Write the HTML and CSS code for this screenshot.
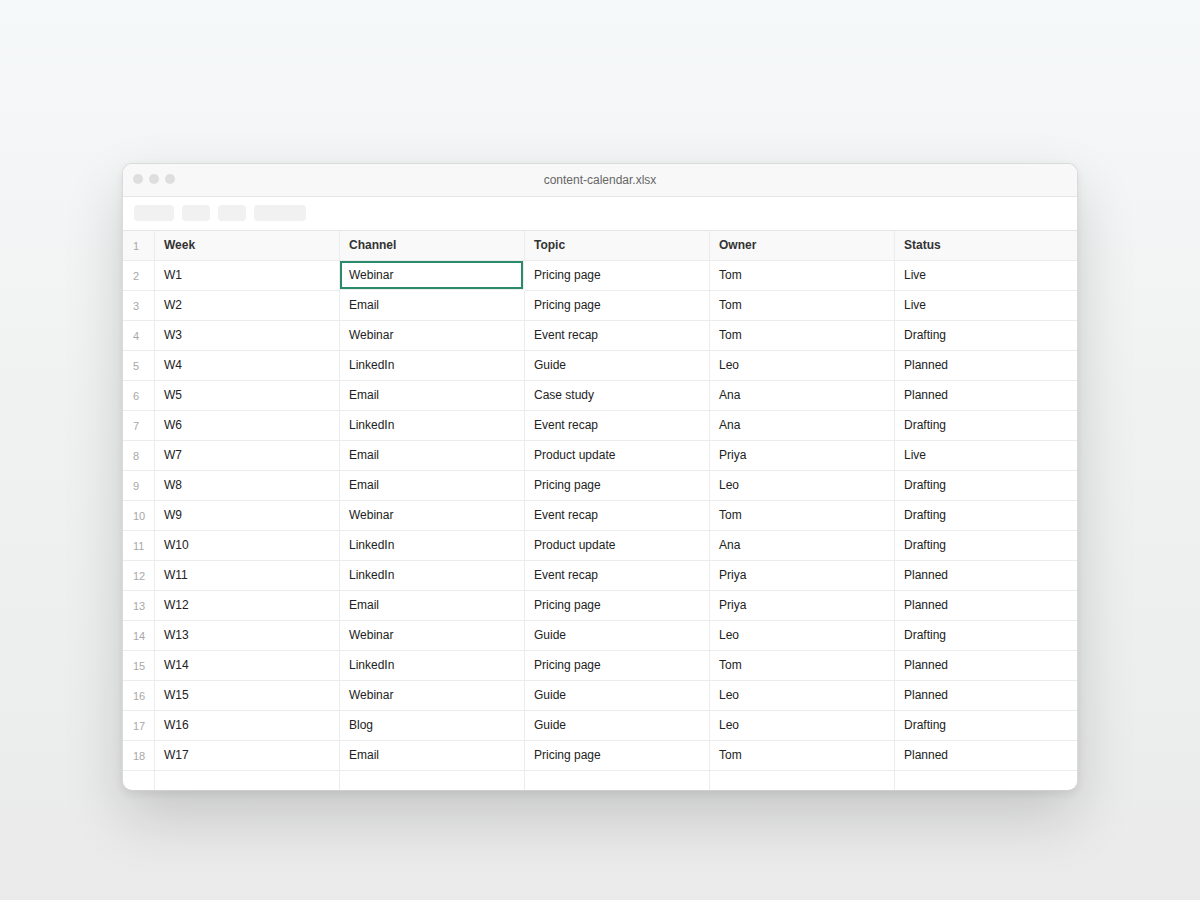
FILE: index.html
```html
<!DOCTYPE html>
<html>
<head>
<meta charset="utf-8">
<link rel="stylesheet" href="styles.css">
</head>
<body>
<div class="stage">
  <div class="window">
    <div class="titlebar">
      <div class="dots"><span class="dot"></span><span class="dot"></span><span class="dot"></span></div>
      <div class="title">content-calendar.xlsx</div>
    </div>
    <div class="toolbar">
      <span class="pill p1"></span><span class="pill p2"></span><span class="pill p2"></span><span class="pill p3"></span>
    </div>
    <div class="grid" id="grid">
      <div class="row head"><div class="num">1</div><div class="cell">Week</div><div class="cell">Channel</div><div class="cell">Topic</div><div class="cell">Owner</div><div class="cell">Status</div></div>
      <div class="row"><div class="num">2</div><div class="cell">W1</div><div class="cell sel">Webinar</div><div class="cell">Pricing page</div><div class="cell">Tom</div><div class="cell">Live</div></div>
      <div class="row"><div class="num">3</div><div class="cell">W2</div><div class="cell">Email</div><div class="cell">Pricing page</div><div class="cell">Tom</div><div class="cell">Live</div></div>
      <div class="row"><div class="num">4</div><div class="cell">W3</div><div class="cell">Webinar</div><div class="cell">Event recap</div><div class="cell">Tom</div><div class="cell">Drafting</div></div>
      <div class="row"><div class="num">5</div><div class="cell">W4</div><div class="cell">LinkedIn</div><div class="cell">Guide</div><div class="cell">Leo</div><div class="cell">Planned</div></div>
      <div class="row"><div class="num">6</div><div class="cell">W5</div><div class="cell">Email</div><div class="cell">Case study</div><div class="cell">Ana</div><div class="cell">Planned</div></div>
      <div class="row"><div class="num">7</div><div class="cell">W6</div><div class="cell">LinkedIn</div><div class="cell">Event recap</div><div class="cell">Ana</div><div class="cell">Drafting</div></div>
      <div class="row"><div class="num">8</div><div class="cell">W7</div><div class="cell">Email</div><div class="cell">Product update</div><div class="cell">Priya</div><div class="cell">Live</div></div>
      <div class="row"><div class="num">9</div><div class="cell">W8</div><div class="cell">Email</div><div class="cell">Pricing page</div><div class="cell">Leo</div><div class="cell">Drafting</div></div>
      <div class="row"><div class="num">10</div><div class="cell">W9</div><div class="cell">Webinar</div><div class="cell">Event recap</div><div class="cell">Tom</div><div class="cell">Drafting</div></div>
      <div class="row"><div class="num">11</div><div class="cell">W10</div><div class="cell">LinkedIn</div><div class="cell">Product update</div><div class="cell">Ana</div><div class="cell">Drafting</div></div>
      <div class="row"><div class="num">12</div><div class="cell">W11</div><div class="cell">LinkedIn</div><div class="cell">Event recap</div><div class="cell">Priya</div><div class="cell">Planned</div></div>
      <div class="row"><div class="num">13</div><div class="cell">W12</div><div class="cell">Email</div><div class="cell">Pricing page</div><div class="cell">Priya</div><div class="cell">Planned</div></div>
      <div class="row"><div class="num">14</div><div class="cell">W13</div><div class="cell">Webinar</div><div class="cell">Guide</div><div class="cell">Leo</div><div class="cell">Drafting</div></div>
      <div class="row"><div class="num">15</div><div class="cell">W14</div><div class="cell">LinkedIn</div><div class="cell">Pricing page</div><div class="cell">Tom</div><div class="cell">Planned</div></div>
      <div class="row"><div class="num">16</div><div class="cell">W15</div><div class="cell">Webinar</div><div class="cell">Guide</div><div class="cell">Leo</div><div class="cell">Planned</div></div>
      <div class="row"><div class="num">17</div><div class="cell">W16</div><div class="cell">Blog</div><div class="cell">Guide</div><div class="cell">Leo</div><div class="cell">Drafting</div></div>
      <div class="row"><div class="num">18</div><div class="cell">W17</div><div class="cell">Email</div><div class="cell">Pricing page</div><div class="cell">Tom</div><div class="cell">Planned</div></div>
      <div class="row"><div class="num"></div><div class="cell"></div><div class="cell"></div><div class="cell"></div><div class="cell"></div><div class="cell"></div></div>
    </div>
  </div>
</div>
</body>
</html>
```

FILE: styles.css
```css
html, body {
  margin: 0;
  padding: 0;
}
body {
  width: 1200px;
  height: 900px;
  background: linear-gradient(180deg, #f6f9f9 0%, #f0f2f2 45%, #eaeaea 100%);
  font-family: "Liberation Sans", Arial, sans-serif;
  overflow: hidden;
}
.stage {
  padding-top: 163px;
  display: flex;
  justify-content: center;
}
.window {
  box-sizing: border-box;
  width: 956px;
  height: 628px;
  background: #fff;
  border: 1px solid #dadada;
  border-bottom-color: #cfcfcf;
  border-radius: 10px;
  overflow: hidden;
  box-shadow: 0 26px 60px rgba(0, 0, 0, 0.16), 0 3px 8px rgba(0, 0, 0, 0.07);
}
.titlebar {
  box-sizing: border-box;
  height: 33px;
  background: #f8f8f8;
  border-bottom: 1px solid #e6e6e6;
  position: relative;
  display: flex;
  align-items: center;
  justify-content: center;
}
.dots {
  position: absolute;
  left: 10px;
  top: 10px;
  display: flex;
  gap: 6px;
}
.dot {
  width: 10px;
  height: 10px;
  border-radius: 50%;
  background: #dedede;
}
.title {
  font-size: 12px;
  color: #666;
}
.toolbar {
  box-sizing: border-box;
  height: 34px;
  border-bottom: 1px solid #e6e6e6;
  display: flex;
  align-items: center;
  gap: 8px;
  padding-left: 11px;
  padding-bottom: 1px;
}
.pill {
  height: 16px;
  border-radius: 4px;
  background: #f1f1f1;
}
.p1 { width: 40px; }
.p2 { width: 28px; }
.p3 { width: 52px; }
.row {
  display: grid;
  grid-template-columns: 32px repeat(5, 185px);
  height: 30px;
}
.num, .cell {
  box-sizing: border-box;
  border-right: 1px solid #ececec;
  border-bottom: 1px solid #ececec;
  display: flex;
  align-items: center;
}
.num {
  font-size: 11px;
  color: #a8a8a8;
  padding-left: 10px;
}
.cell {
  font-size: 12px;
  color: #222;
  padding-left: 9px;
  padding-bottom: 1px;
}
.head .num, .head .cell {
  background: #f9f9f9;
}
.head .cell {
  font-weight: bold;
  color: #333;
}
.sel {
  box-shadow: inset 0 0 0 2px #2b8a67;
  margin-right: 1px;
  margin-bottom: 1px;
  padding-left: 9px;
  padding-bottom: 0;
}
```
